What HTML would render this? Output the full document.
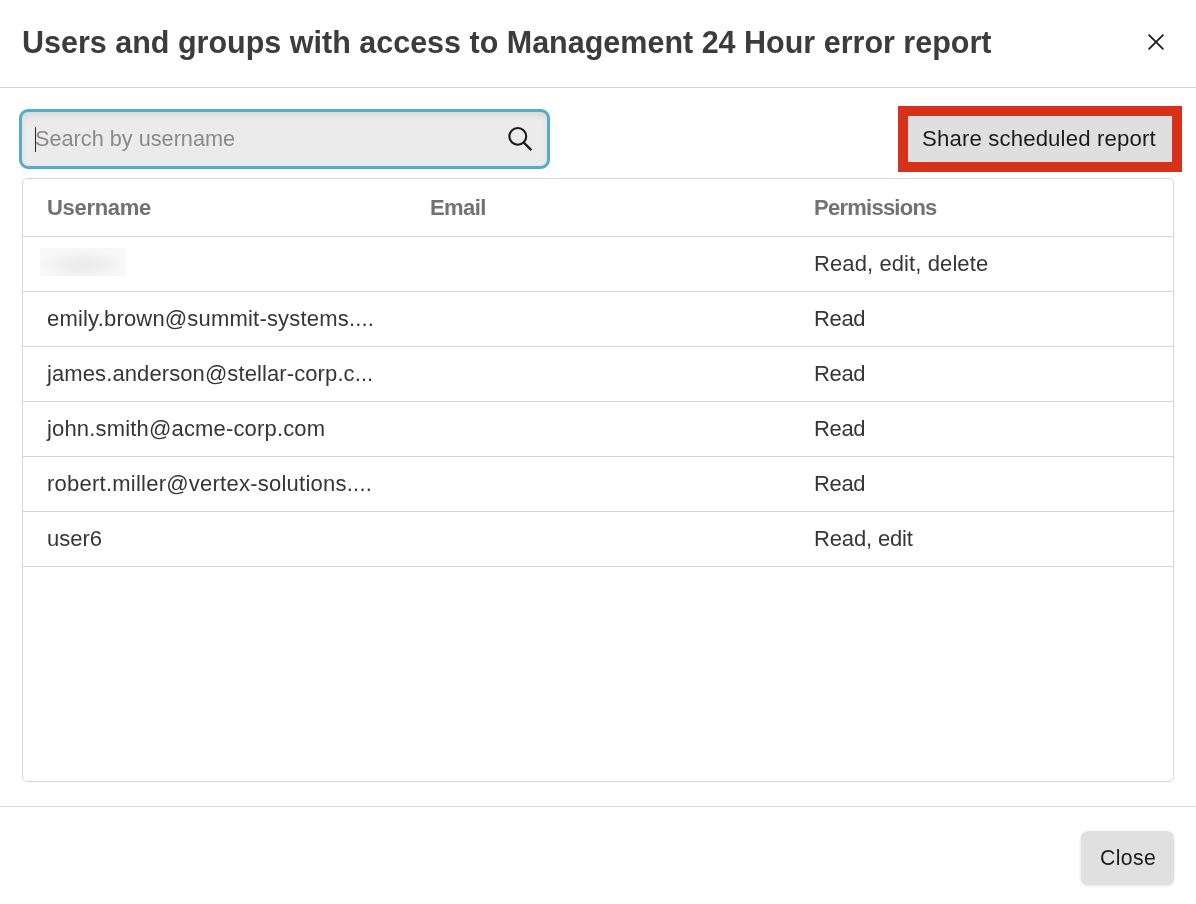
<!DOCTYPE html>
<html>
<head>
<meta charset="utf-8">
<style>
html,body{margin:0;padding:0;background:#fff;}
body{width:1196px;height:904px;position:relative;overflow:hidden;font-family:"Liberation Sans",sans-serif;}
.abs{position:absolute;}
.t{position:absolute;white-space:pre;line-height:1;will-change:transform;}
.title{left:22px;top:27px;font-size:30.5px;font-weight:bold;color:#3c3c3c;}
.hline{position:absolute;left:0;width:1196px;height:1px;background:#d8d8d8;}
.search{left:19px;top:109px;width:525px;height:54px;border:3px solid #55adc9;border-radius:9px;background:#ebebeb;box-shadow:inset 0 4px 9px -3px rgba(0,0,0,.12), inset 0 0 2px rgba(0,0,0,.04);}
.caret{left:34.5px;top:127px;width:1.7px;height:24.5px;background:#262626;border-radius:1px;}
.ph{left:35px;top:128px;font-size:21.7px;color:#8a8a8a;}
.redbox{left:898px;top:106px;width:264px;height:46px;border:10px solid #d5311b;background:#dfdfdf;}
.share{left:922.2px;top:128px;font-size:22.2px;letter-spacing:0.14px;color:#1c1c1c;}
.card{left:22px;top:178px;width:1150px;height:602px;border:1px solid #d7d7d7;border-radius:5px;}
.rline{position:absolute;left:23px;width:1150px;height:1px;background:#d7d7d7;}
.th{top:197px;font-size:22px;font-weight:bold;color:#727272;}
.td{font-size:22px;color:#363636;}
.blur{left:40px;top:248px;width:86px;height:28px;background:radial-gradient(ellipse 50% 55% at 50% 60%, #ebebeb 0%, #efefef 45%, #f5f5f5 80%, #f8f8f8 100%);}
.closebtn{left:1081px;top:830.8px;width:93.2px;height:54.6px;border-radius:7px;background:#e0e0e0;box-shadow:0 1px 3px rgba(0,0,0,.12);}
.close{left:1100px;top:847px;font-size:21.2px;letter-spacing:0.4px;color:#1c1c1c;}
</style>
</head>
<body>
<div class="t title">Users and groups with access to Management 24 Hour error report</div>
<svg class="abs" style="left:1146px;top:31.7px" width="20" height="20" viewBox="0 0 20 20"><path d="M3.1 3.1 L16.9 16.9 M16.9 3.1 L3.1 16.9" stroke="#1f1f1f" stroke-width="1.8" stroke-linecap="round" fill="none"/></svg>
<div class="hline" style="top:87px"></div>

<div class="abs search"></div>
<div class="abs caret"></div>
<div class="t ph">Search by username</div>
<svg class="abs" style="left:506px;top:125px" width="28" height="28" viewBox="0 0 28 28"><circle cx="11.8" cy="11.4" r="8.4" stroke="#1a1a1a" stroke-width="2.1" fill="none"/><path d="M17.6 17.4 L25.3 25.1" stroke="#1a1a1a" stroke-width="2.3" stroke-linecap="butt"/></svg>

<div class="abs redbox"></div>
<div class="t share">Share scheduled report</div>

<div class="abs card"></div>
<div class="t th" style="left:47px;letter-spacing:-0.3px">Username</div>
<div class="t th" style="left:430px;letter-spacing:-0.6px">Email</div>
<div class="t th" style="left:814px;letter-spacing:-0.75px">Permissions</div>
<div class="rline" style="top:236px"></div>
<div class="rline" style="top:291px"></div>
<div class="rline" style="top:346px"></div>
<div class="rline" style="top:401px"></div>
<div class="rline" style="top:456px"></div>
<div class="rline" style="top:511px"></div>
<div class="rline" style="top:566px"></div>

<div class="abs blur"></div>
<div class="t td" style="left:814px;top:253.1px;letter-spacing:0.1px">Read, edit, delete</div>
<div class="t td" style="left:47px;top:308.3px;letter-spacing:0.19px">emily.brown@summit-systems....</div>
<div class="t td" style="left:814px;top:308.3px;letter-spacing:-0.35px">Read</div>
<div class="t td" style="left:47px;top:363.3px;letter-spacing:0.1px">james.anderson@stellar-corp.c...</div>
<div class="t td" style="left:814px;top:363.3px;letter-spacing:-0.35px">Read</div>
<div class="t td" style="left:47px;top:418.3px;letter-spacing:0.17px">john.smith@acme-corp.com</div>
<div class="t td" style="left:814px;top:418.3px;letter-spacing:-0.35px">Read</div>
<div class="t td" style="left:47px;top:473.3px;letter-spacing:0.24px">robert.miller@vertex-solutions....</div>
<div class="t td" style="left:814px;top:473.3px;letter-spacing:-0.35px">Read</div>
<div class="t td" style="left:47px;top:528.2px">user6</div>
<div class="t td" style="left:814px;top:528.2px;letter-spacing:-0.15px">Read, edit</div>

<div class="hline" style="top:806px"></div>
<div class="abs closebtn"></div>
<div class="t close">Close</div>
</body>
</html>
